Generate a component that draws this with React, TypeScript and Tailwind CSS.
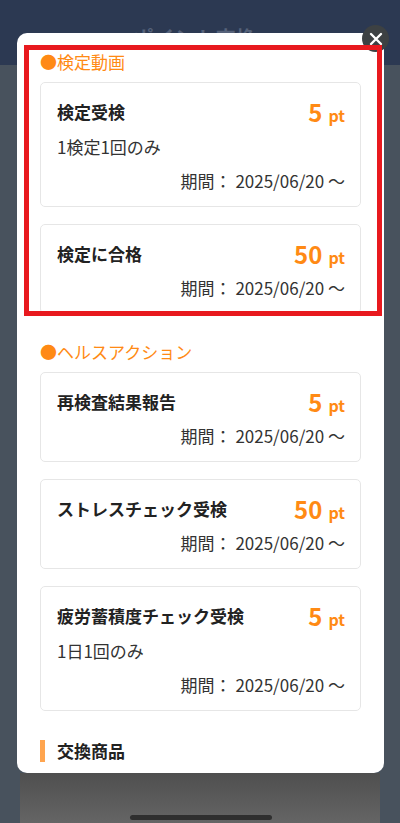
import React from "react";

type Mission = {
  title: string;
  points: number;
  note?: string;
  since: string;
};

const sections: { label: string; items: Mission[] }[] = [
  {
    label: "検定動画",
    items: [
      { title: "検定受検", points: 5, note: "1検定1回のみ", since: "2025/06/20" },
      { title: "検定に合格", points: 50, since: "2025/06/20" },
    ],
  },
  {
    label: "ヘルスアクション",
    items: [
      { title: "再検査結果報告", points: 5, since: "2025/06/20" },
      { title: "ストレスチェック受検", points: 50, since: "2025/06/20" },
      { title: "疲労蓄積度チェック受検", points: 5, note: "1日1回のみ", since: "2025/06/20" },
    ],
  },
];

const font = { fontFamily: '"Noto Sans CJK JP", "Noto Sans", sans-serif' };

function MissionCard({ item }: { item: Mission }) {
  return (
    <div className="border border-[#e6e6e6] rounded-[5px] pt-[15px] pb-[11px] pl-4 pr-[15px] flex flex-col gap-[6px]">
      <div className="flex items-center justify-between h-[28px]">
        <span className="text-[17px] font-bold text-[#222]">{item.title}</span>
        <span className="flex items-baseline text-[#ff8a14] font-bold">
          <span className="text-[24px] leading-none">{item.points}</span>
          <span className="text-[16px] leading-none ml-[6px]">pt</span>
        </span>
      </div>
      {item.note && <div className="text-[17px] leading-[29px] text-[#333]">{item.note}</div>}
      <div className="text-[17px] leading-[28px] text-[#333] text-right">
        期間： {item.since} ～
      </div>
    </div>
  );
}

export default function App() {
  return (
    <div className="relative w-full h-[823px] overflow-hidden bg-[#48525d] flex flex-col" style={font}>
      {/* page behind the dialog */}
      <div className="h-[65px] bg-[#2c3952] flex items-center px-5 pt-[10px]">
        <span className="text-[#56627a] text-[22px]">‹</span>
        <span className="flex-1 text-center text-[#56627a] text-[20px] font-bold tracking-wide mr-4">
          ポイント交換
        </span>
      </div>
      <div className="flex-1" />
      <div className="mx-5 h-[50px] bg-gradient-to-b from-[#4f4f4f] to-[#656565]" />
      <div className="absolute bottom-[3px] left-[130px] w-[142px] h-[5px] rounded-full bg-[#2f2f2f]" />

      {/* dialog */}
      <div className="absolute left-[17px] top-[33px] w-[367px] h-[740px] bg-white rounded-[10px] overflow-hidden">
        <div className="px-[23px] pt-[17px]">
          {sections.map((s, i) => (
            <div key={s.label} className={i > 0 ? "mt-[26px]" : ""}>
              <div className="text-[17px] leading-[24px] text-[#ff8a14] mb-2">●{s.label}</div>
              <div className="flex flex-col gap-[17px]">
                {s.items.map((it) => (
                  <MissionCard key={it.title} item={it} />
                ))}
              </div>
            </div>
          ))}
          <div className="mt-[27px] flex items-center gap-3">
            <span className="w-[5px] h-[22px] bg-[#ffa54f]" />
            <span className="text-[17px] font-bold text-[#222]">交換商品</span>
          </div>
          <div className="mt-4 h-[40px] border border-[#f5e6d8] rounded-[5px]" />
        </div>
      </div>

      {/* close button */}
      <button className="absolute left-[362px] top-[25px] w-[27px] h-[27px] rounded-full bg-[#3d4143] flex items-center justify-center">
        <svg width="14" height="14" viewBox="0 0 14 14">
          <path d="M2 2L12 12M12 2L2 12" stroke="#fff" strokeWidth="2.4" strokeLinecap="round" />
        </svg>
      </button>

      {/* highlight frame */}
      <div className="absolute left-[24px] top-[45px] w-[358px] h-[271px] border-[5px] border-[#e8191e] pointer-events-none" />
    </div>
  );
}
